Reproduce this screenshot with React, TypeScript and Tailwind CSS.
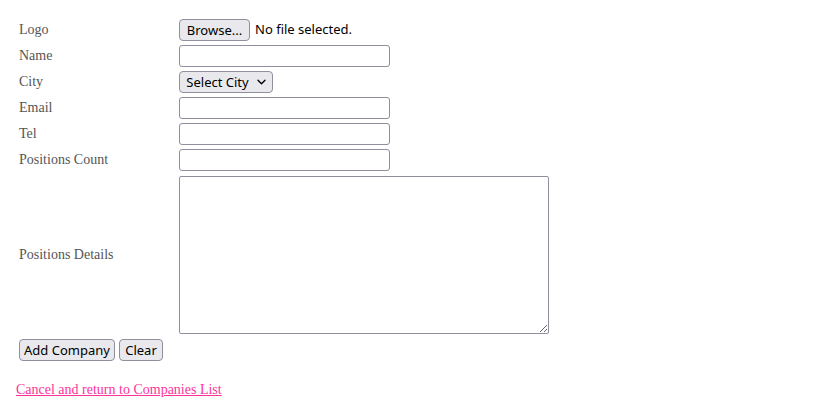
import { useState } from 'react';

const ctrl =
  "border border-[#8f8f9d] bg-[#e9e9ed] rounded-[4px] text-[13px] leading-none text-black h-[22px] flex items-center justify-center font-['Noto_Sans',sans-serif]";
const field = 'border border-[#8f8f9d] rounded-[3px] bg-white h-[22px] w-[211px] outline-none px-1 text-[13px]';

function Chevron() {
  return (
    <svg width="9" height="6" viewBox="0 0 9 6" className="ml-[8px]">
      <path d="M1 1.2 L4.5 4.7 L8 1.2" fill="none" stroke="#000" strokeWidth="1.4" strokeLinecap="round" strokeLinejoin="round" />
    </svg>
  );
}

export default function App() {
  const [name, setName] = useState('');
  const [email, setEmail] = useState('');
  const [tel, setTel] = useState('');
  const [count, setCount] = useState('');
  const [details, setDetails] = useState('');

  // 清空表单
  const handleClear = () => {
    setName('');
    setEmail('');
    setTel('');
    setCount('');
    setDetails('');
  };

  const label = "text-[14px] text-[#555] font-['Liberation_Serif',serif] leading-none";

  return (
    <div className="bg-white min-h-[401px] px-4 pt-[19px]">
      <div className="grid grid-cols-[160px_auto] gap-y-[4px] items-center pl-[3px] justify-start">
        <span className={label}>Logo</span>
        <div className="flex items-center">
          <button className={`${ctrl} w-[71px]`}>Browse...</button>
          <span className="ml-[5px] text-[13px] text-black font-['Noto_Sans',sans-serif]">No file selected.</span>
        </div>

        <span className={label}>Name</span>
        <input className={field} value={name} onChange={e => setName(e.target.value)} />

        <span className={label}>City</span>
        <div>
          <button className={`${ctrl} w-[94px]`}>
            Select City
            <Chevron />
          </button>
        </div>

        <span className={label}>Email</span>
        <input className={field} value={email} onChange={e => setEmail(e.target.value)} />

        <span className={label}>Tel</span>
        <input className={field} value={tel} onChange={e => setTel(e.target.value)} />

        <span className={label}>Positions Count</span>
        <input className={field} value={count} onChange={e => setCount(e.target.value)} />

        <span className={label}>Positions Details</span>
        <textarea
          className="border border-[#8f8f9d] rounded-[2px] bg-white w-[370px] h-[158px] mt-[1px] outline-none block"
          value={details}
          onChange={e => setDetails(e.target.value)}
        />
      </div>

      <div className="flex gap-[4px] pl-[3px] mt-[5px]">
        <button className={`${ctrl} w-[96px]`}>Add Company</button>
        <button className={`${ctrl} w-[44px]`} onClick={handleClear}>Clear</button>
      </div>

      <a href="#" className="inline-block mt-[22px] text-[14px] text-[#ff3399] underline font-['Liberation_Serif',serif] leading-none">
        Cancel and return to Companies List
      </a>
    </div>
  );
}
